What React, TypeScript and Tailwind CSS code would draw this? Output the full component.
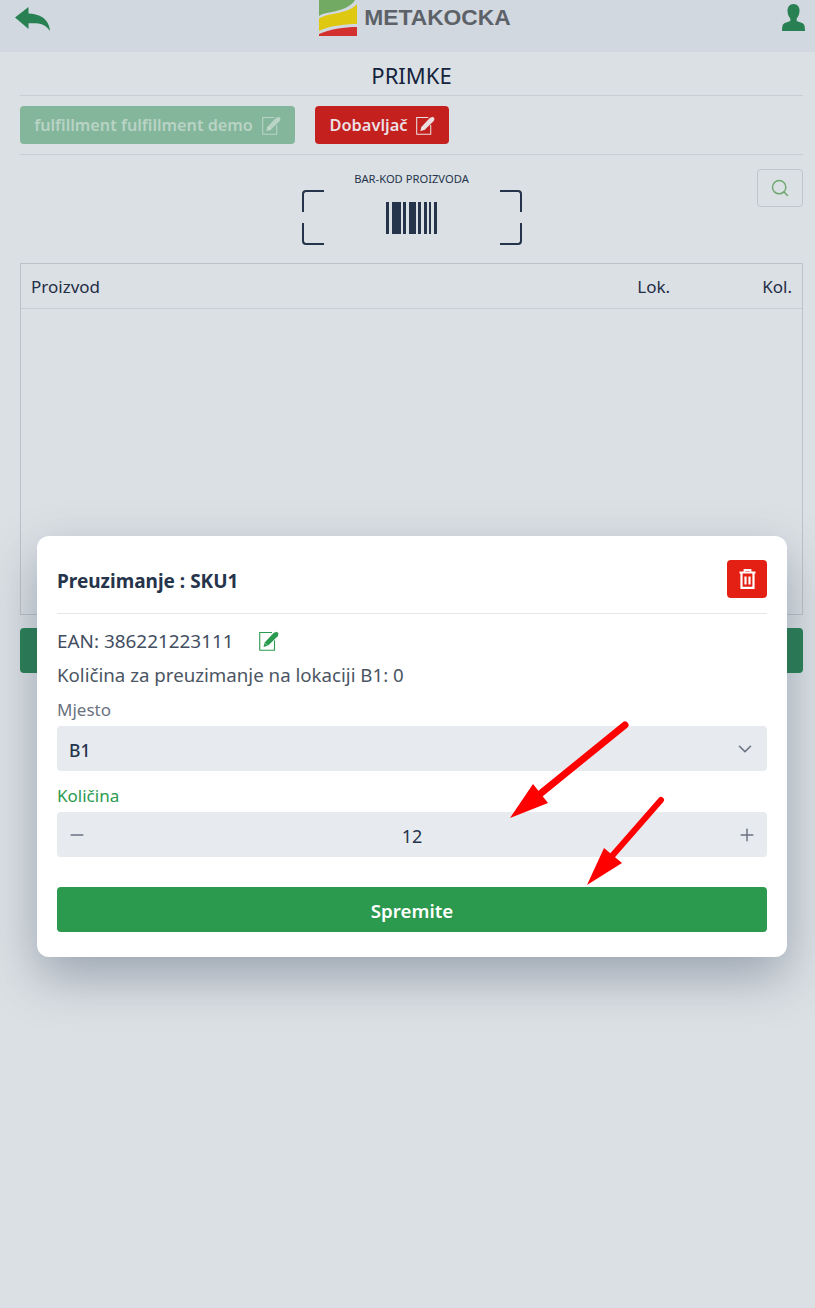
import { ChevronDown, Minus, Plus, Search } from 'lucide-react';

const font = { fontFamily: '"Noto Sans", sans-serif' };

function EditIcon({ className }: { className?: string }) {
  return (
    <svg viewBox="0 0 20 20" className={className} fill="none">
      <path d="M15.500 9.500v9.750H0.750V1.500H13" stroke="currentColor" strokeWidth="1.100" />
      <path d="M4.500 16l1.200-4.500L14.800 1.800 18 0.800l1.500 2-.8 2.500-9.500 9.300z" fill="currentColor" />
      <path d="M5.700 11.500l3.500 3.500" stroke="white" strokeOpacity="0.55" strokeWidth="0.800" />
    </svg>
  );
}

function BackIcon() {
  return (
    <svg viewBox="0 0 35 24" className="h-6 w-[35px] text-[#288053]" fill="currentColor">
      <path d="M0 10.500L13.500 0v6.500c5 .2 9.500 1 13.500 3.500 5 3.200 7.500 8 8 14-3-4.500-7-6.800-11.500-7.500-3.200-.5-6.500-.4-10-.2V22z" />
    </svg>
  );
}

function UserIcon() {
  return (
    <svg viewBox="0 0 23 27" className="h-[27px] w-[23px] text-[#288053]" fill="currentColor">
      <path d="M11.500 0c4 0 6 3 6 6.500 0 3-1 6-2.800 8v2.500c2.500 1 6 1.500 7.300 3.500.7 1.200 1 3.800 1 6.500H0c0-2.700.3-5.300 1-6.500 1.300-2 4.800-2.500 7.300-3.500v-2.500c-1.800-2-2.800-5-2.800-8C5.500 3 7.500 0 11.500 0z" />
    </svg>
  );
}

function Logo() {
  return (
    <svg viewBox="0 0 38 36" className="h-9 w-[38px] shrink-0">
      <path d="M0 0h36C32 7 22 10 13 12 7 13 3 13.500 0 16z" fill="#72a963" />
      <path d="M38 4v20C25 24 10 26 0 31V18.500c4-2.500 8-3.500 14-4.500C24 12 33 10 38 4z" fill="#dfc810" />
      <path d="M38 27v9H0v-2c10-4.500 25-7 38-7z" fill="#d3312f" />
    </svg>
  );
}

function Barcode() {
  const bars = [3, 9, 3, 7, 3, 3, 2, 3];
  return (
    <div className="flex h-[32px] items-stretch gap-[2.5px]">
      {bars.map((w, i) => (
        <div key={i} className="bg-[#25344b]" style={{ width: w }} />
      ))}
    </div>
  );
}

function Arrows() {
  return (
    <svg className="absolute left-0 top-0 h-[1308px] w-[815px]" viewBox="0 0 815 1308">
      <path d="M625 725L540 794" stroke="#ff0000" strokeWidth="7" strokeLinecap="round" />
      <path d="M510 818L533 784L548 803z" fill="#ff0000" />
      <path d="M661 800L612 856" stroke="#ff0000" strokeWidth="6" strokeLinecap="round" />
      <path d="M587 885L604 848L622 863z" fill="#ff0000" />
    </svg>
  );
}

export default function App() {
  return (
    <div className="relative h-[1308px] w-[815px] overflow-hidden bg-[#dbe0e4] text-[#1f2d45]" style={font}>
      <header className="relative flex h-[52px] items-start justify-between bg-[#d2d8e0] pl-[15px] pr-[10px]">
        <div className="pt-[7px]"><BackIcon /></div>
        <div className="flex items-start gap-[7px] pr-[2px]">
          <Logo />
          <span className="pt-[4px] text-[22.800px] font-bold leading-[27px] text-[#5c6268]" style={{ fontFamily: '"Liberation Sans", sans-serif' }}>METAKOCKA</span>
        </div>
        <div className="pt-[4px]"><UserIcon /></div>
      </header>

      <main className="pl-[20px] pr-[12px]">
        <h1 className="h-[44px] border-b border-[#c8cdd4] pt-[9px] text-center text-[22px] leading-[28px] text-[#15233c]">PRIMKE</h1>
        <div className="flex h-[59px] gap-[20px] border-b border-[#c8cdd4] pt-[10px]">
          <div className="flex h-[38px] w-[275px] items-center justify-center gap-[9px] rounded bg-[#83b69b] text-[16.200px] font-semibold text-[#b9d3c5]">
            fulfillment fulfillment demo <EditIcon className="size-[19px]" />
          </div>
          <div className="flex h-[38px] w-[134px] items-center justify-center gap-[8px] rounded bg-[#c4201e] text-[16.400px] font-semibold text-[#ebdfe2]">
            Dobavljač <EditIcon className="size-[19px]" />
          </div>
        </div>

        <div className="relative h-[108px]">
          <div className="flex flex-col items-center pt-[17px]">
            <div className="text-[11.200px] leading-[14px] text-[#25344b]">BAR-KOD PROIZVODA</div>
            <div className="relative mt-[4px] flex h-[55px] w-[220px] items-center justify-center">
              <Barcode />
              <span className="absolute left-0 top-0 h-[22px] w-[22px] rounded-tl-[4px] border-l-2 border-t-2 border-[#25344b]" />
              <span className="absolute right-0 top-0 h-[22px] w-[22px] rounded-tr-[4px] border-r-2 border-t-2 border-[#25344b]" />
              <span className="absolute bottom-0 left-0 h-[22px] w-[22px] rounded-bl-[4px] border-b-2 border-l-2 border-[#25344b]" />
              <span className="absolute bottom-0 right-0 h-[22px] w-[22px] rounded-br-[4px] border-b-2 border-r-2 border-[#25344b]" />
            </div>
          </div>
          <div className="absolute right-0 top-[14px] flex h-[38px] w-[46px] items-center justify-center rounded border border-[#bfc5cb]">
            <Search className="size-[20px] text-[#6fa96f]" strokeWidth={1.75} />
          </div>
        </div>

        <div className="h-[352px] border border-[#bcc2ca]">
          <div className="flex h-[45px] items-center border-b border-[#c8cdd4] px-[10px] pt-[1px] text-[17px] text-[#1f2d45]">
            <span className="flex-1">Proizvod</span>
            <span className="w-[125px]">Lok.</span>
            <span>Kol.</span>
          </div>
        </div>
        <div className="mt-[13px] h-[45px] rounded bg-[#288053]" />
      </main>

      <div className="absolute left-[37px] top-[536px] h-[421px] w-[750px] rounded-xl bg-white px-[20px] shadow-[0_20px_50px_rgba(60,75,100,0.4)]" style={font}>
        <div className="flex h-[78px] items-start justify-between border-b border-[#e5e7eb] pt-[24px]">
          <div className="pt-[6px] text-[19px] font-bold leading-[30px] text-[#25344b]">Preuzimanje : SKU1</div>
          <div className="flex h-[38px] w-[40px] items-center justify-center rounded bg-[#e41f13]">
            <svg viewBox="0 0 17 20" className="h-[20px] w-[17px]" fill="none" stroke="white">
              <path d="M0.500 3.500h16M5.500 3V1h6v2" strokeWidth="1.800" />
              <path d="M2.500 4v14.800h12V4" strokeWidth="2.200" />
              <path d="M6.500 7.500v8M10.500 7.500v8" strokeWidth="2.200" />
            </svg>
          </div>
        </div>
        <div className="mt-[13px] flex h-[28px] items-center gap-[25px] text-[18.900px] text-[#434e5f]">
          EAN: 386221223111
          <EditIcon className="size-[20px] text-[#2a9a4e]" />
        </div>
        <div className="mt-[7px] text-[18.700px] leading-[26px] text-[#4b5563]">Količina za preuzimanje na lokaciji B1: 0</div>
        <div className="mt-[10px] text-[17px] leading-[24px] text-[#6b7280]">Mjesto</div>
        <div className="mt-[4px] flex h-[45px] items-center justify-between rounded bg-[#e7ebf0] pl-[12px] pr-[11px] text-[17.500px] font-medium text-[#25344b]">
          <span className="pt-[3px]">B1</span>
          <ChevronDown className="size-[22px] text-[#6b7280]" strokeWidth={1.75} />
        </div>
        <div className="mt-[13px] text-[17px] leading-[24px] text-[#2a9a4e]">Količina</div>
        <div className="mt-[4px] flex h-[45px] items-center justify-between rounded bg-[#e7ebf0] px-[10px] text-[18px] text-[#25344b]">
          <Minus className="size-[20px] text-[#6b7280]" strokeWidth={1.75} />
          <span className="pt-[3px]">12</span>
          <Plus className="size-[20px] text-[#6b7280]" strokeWidth={1.75} />
        </div>
        <div className="mt-[30px] flex h-[45px] items-center justify-center rounded bg-[#2b9a4e] pt-[3px] text-[18.700px] font-semibold text-white">Spremite</div>
      </div>

      <Arrows />
    </div>
  );
}
